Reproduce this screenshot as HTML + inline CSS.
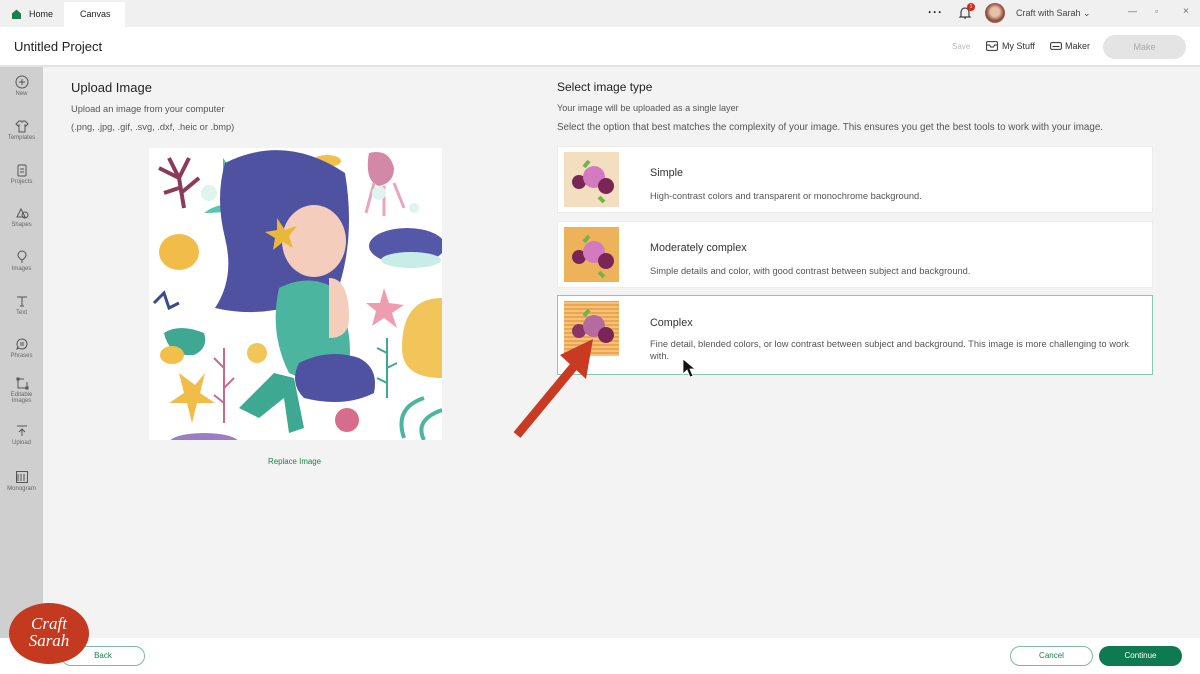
<!DOCTYPE html>
<html><head><meta charset="utf-8"><style>
*{margin:0;padding:0;box-sizing:border-box}
body{width:1200px;height:674px;overflow:hidden;font-family:"Liberation Sans",sans-serif;background:#f3f3f3;position:relative;color:#222}
.abs{position:absolute}
.top{left:0;top:0;width:1200px;height:27px;background:#f0f0f0}
.hdr{left:0;top:27px;width:1200px;height:40px;background:#fff;border-bottom:2px solid #e2e2e2}
.side{left:0;top:67px;width:43px;height:607px;background:#cfcfcf}
.si{position:absolute;width:43px;text-align:center;font-size:6px;color:#666}
.si svg{display:block;margin:0 auto 2px}
.card{position:absolute;left:557px;width:596px;background:#fff;border:1px solid #ececec}
.card .t{position:absolute;left:92px;font-size:10.8px;color:#333}
.card .d{position:absolute;left:92px;font-size:9.3px;color:#555;line-height:12px}
.thumb{position:absolute;left:6px;top:5px;width:55px;height:55px}
.foot{left:0;top:638px;width:1200px;height:36px;background:#fff}
.btn{position:absolute;height:20px;border-radius:10px;font-size:8px;text-align:center;line-height:18px}
</style></head><body>
<div class="abs top">
 <svg class="abs" style="left:11px;top:9px" width="11" height="10" viewBox="0 0 11 10"><path d="M1 4.5L5.5 0.5 10 4.5V10H1z" fill="#1b7f4f"/></svg>
 <div class="abs" style="left:29px;top:9px;font-size:9px">Home</div>
 <div class="abs" style="left:64px;top:2px;width:61px;height:25px;background:#fff"></div>
 <div class="abs" style="left:80px;top:9px;font-size:9px">Canvas</div>
 <div class="abs" style="left:928px;top:5px;font-size:12px;font-weight:bold;letter-spacing:1px">···</div>
 <svg class="abs" style="left:958px;top:6px" width="14" height="14" viewBox="0 0 14 14"><path d="M3 10V6a4 4 0 0 1 8 0v4l1 1H2z M6 12h2" fill="none" stroke="#444" stroke-width="1.2"/></svg>
 <div class="abs" style="left:967px;top:3px;width:8px;height:8px;border-radius:50%;background:#d42a1a;color:#fff;font-size:5px;text-align:center;line-height:8px">1</div>
 <div class="abs" style="left:985px;top:3px;width:20px;height:20px;border-radius:50%;background:radial-gradient(circle at 50% 45%,#e8c0a8 30%,#8a4a3a 60%,#c9a9a0)"></div>
 <div class="abs" style="left:1016px;top:8px;font-size:9px;color:#444">Craft with Sarah ⌄</div>
 <div class="abs" style="left:1128px;top:6px;font-size:9px;color:#666">—</div>
 <div class="abs" style="left:1155px;top:6px;font-size:9px;color:#666">▫</div>
 <div class="abs" style="left:1183px;top:6px;font-size:10px;color:#666">×</div>
</div>
<div class="abs hdr">
 <div class="abs" style="left:14px;top:12px;font-size:13px;color:#222">Untitled Project</div>
 <div class="abs" style="left:952px;top:15px;font-size:8px;color:#bbb">Save</div>
 <svg class="abs" style="left:986px;top:14px" width="12" height="10" viewBox="0 0 12 10"><rect x="0.6" y="0.6" width="10.8" height="8.8" rx="1" fill="none" stroke="#333"/><path d="M0.6 4h3l1 2h3l1-2h3" fill="none" stroke="#333"/></svg>
 <div class="abs" style="left:1002px;top:14px;font-size:9px;color:#333">My Stuff</div>
 <svg class="abs" style="left:1050px;top:15px" width="12" height="8" viewBox="0 0 12 8"><rect x="0.6" y="0.6" width="10.8" height="6.8" rx="1.5" fill="none" stroke="#333"/><path d="M2.5 4.5h7" stroke="#333"/></svg>
 <div class="abs" style="left:1065px;top:14px;font-size:9px;color:#333">Maker</div>
 <div class="abs" style="left:1103px;top:8px;width:83px;height:24px;border-radius:12px;background:#e4e4e4;color:#aaa;font-size:9px;text-align:center;line-height:24px">Make</div>
</div>
<div class="abs side">
 <div class="si" style="top:8px"><svg width="14" height="14" viewBox="0 0 14 14"><circle cx="7" cy="7" r="6" fill="none" stroke="#555"/><path d="M7 4v6M4 7h6" stroke="#555"/></svg>New</div>
 <div class="si" style="top:52px"><svg width="14" height="14" viewBox="0 0 14 14"><path d="M4 2L1 5l2 2 1-1v7h6V6l1 1 2-2-3-3H8a1 1 0 0 1-2 0z" fill="none" stroke="#555"/></svg>Templates</div>
 <div class="si" style="top:96px"><svg width="14" height="14" viewBox="0 0 14 14"><rect x="3" y="2" width="8" height="11" rx="1" fill="none" stroke="#555"/><path d="M5 6h4M5 9h4" stroke="#555"/></svg>Projects</div>
 <div class="si" style="top:139px"><svg width="14" height="14" viewBox="0 0 14 14"><path d="M2 11L6 3l4 8z" fill="none" stroke="#555"/><circle cx="10" cy="9" r="3" fill="none" stroke="#555"/></svg>Shapes</div>
 <div class="si" style="top:183px"><svg width="14" height="14" viewBox="0 0 14 14"><path d="M7 1a4 4 0 0 1 4 4c0 3-4 5-4 5S3 8 3 5a4 4 0 0 1 4-4zM7 10v3" fill="none" stroke="#555"/></svg>Images</div>
 <div class="si" style="top:227px"><svg width="14" height="14" viewBox="0 0 14 14"><path d="M2 3h10M7 3v9M5 12h4" stroke="#555" fill="none"/></svg>Text</div>
 <div class="si" style="top:270px"><svg width="14" height="14" viewBox="0 0 14 14"><path d="M7 2a5 5 0 1 1-3 9l-2 1 1-2a5 5 0 0 1 4-8zM5 6h4M5 8h4" fill="none" stroke="#555"/></svg>Phrases</div>
 <div class="si" style="top:309px"><svg width="14" height="14" viewBox="0 0 14 14"><path d="M3 3v9h9M3 3h6M12 6v6" fill="none" stroke="#555"/><rect x="1.5" y="1.5" width="3" height="3" fill="#555"/><rect x="10.5" y="10.5" width="3" height="3" fill="#555"/></svg>Editable<br>Images</div>
 <div class="si" style="top:357px"><svg width="14" height="14" viewBox="0 0 14 14"><path d="M2 2h10M7 12V5M4 8l3-3 3 3" fill="none" stroke="#555"/></svg>Upload</div>
 <div class="si" style="top:403px"><svg width="14" height="14" viewBox="0 0 14 14"><rect x="1.5" y="1.5" width="11" height="11" fill="none" stroke="#555"/><path d="M3 4v7M6 4v7M9 4v7" stroke="#555"/></svg>Monogram</div>
</div>
<div class="abs" style="left:71px;top:80px;font-size:13px;color:#222">Upload Image</div>
<div class="abs" style="left:71px;top:104px;font-size:9.3px;color:#555">Upload an image from your computer</div>
<div class="abs" style="left:71px;top:122px;font-size:9.3px;color:#555">(.png, .jpg, .gif, .svg, .dxf, .heic or .bmp)</div>
<svg class="abs" style="left:149px;top:148px" width="293" height="292" viewBox="0 0 293 292">
<rect width="293" height="292" fill="#fff"/>
<path d="M35 60L30 30 20 10M30 30L10 20M30 30L40 10M30 40L15 45M32 45L50 30" stroke="#8c3a5a" stroke-width="4" fill="none"/>
<ellipse cx="102" cy="18" rx="22" ry="10" fill="#5a5fa8"/><path d="M80 18l-6-8v16z" fill="#4dbfa8"/>
<ellipse cx="178" cy="13" rx="14" ry="6" fill="#f2c04a"/>
<path d="M55 65q15-12 40-8-10 8-40 8z" fill="#58c7b0"/>
<ellipse cx="30" cy="104" rx="20" ry="18" fill="#f2bc48"/>
<path d="M76 15q60-30 120 10 10 60 -5 110 -60 40-125 25 20-30 10-70 -10-40 0-75z" fill="#4f52a0"/>
<ellipse cx="165" cy="93" rx="32" ry="36" fill="#f4cdbd"/>
<path d="M128 70l8 12 12-4-8 10 4 12-10-6-10 8 2-12-10-6 12-2z" fill="#e9b83a"/>
<path d="M130 140q30-15 55 0 20 40 15 80 -30 20-60 5 -20-40-10-85z" fill="#4cb5a0"/>
<path d="M180 130q20 0 20 40 0 20-20 20z" fill="#f4cdbd"/>
<path d="M150 215q30-15 60-5 20 10 15 35 -30 15-70 5 -15-15-5-35z" fill="#4f52a0"/>
<path d="M125 225l-35 35 20 10 25-20 5 35 15-5-10-50z" fill="#3fa893"/>
<path d="M220 5q20-5 25 15 0 15-15 18 -15-5-10-33z" fill="#d488a8"/><path d="M225 35l-8 30M235 38l0 30M245 35l10 25" stroke="#e6a6c0" stroke-width="3" fill="none"/>
<ellipse cx="258" cy="98" rx="38" ry="18" fill="#5558a8"/><ellipse cx="262" cy="112" rx="30" ry="8" fill="#c8ece6"/>
<path d="M293 150q-40 0-40 50 0 30 40 30z" fill="#f2c55a"/>
<path d="M235 140l5 15 15 2-12 8 5 15-13-10-12 8 4-15-10-8h14z" fill="#ee9cb0"/>
<path d="M15 185q15-10 40 0 5 15-10 22 -25 2-30-22z" fill="#3fa893"/><ellipse cx="23" cy="207" rx="12" ry="9" fill="#f2c04a"/>
<path d="M30 225l5 20 -15 10 18 0 5 20 5-20 18 0-15-10 5-20-10 12z" fill="#f2bc48"/>
<circle cx="108" cy="205" r="10" fill="#f2c55a"/>
<path d="M75 200v75M75 220l-10-10M75 240l10-10M75 255l-10-8" stroke="#c66b8a" stroke-width="2" fill="none"/>
<path d="M238 190v60M238 205l-10-5M238 220l10-5M238 235l-10-5" stroke="#3fa893" stroke-width="2" fill="none"/>
<circle cx="198" cy="272" r="12" fill="#d76d8a"/>
<ellipse cx="55" cy="295" rx="35" ry="10" fill="#9a7ec4"/>
<path d="M255 290q-10-30 20-40 M275 292q-10-20 18-30" stroke="#4cb5a0" stroke-width="4" fill="none"/>
<path d="M5 155l10-10 5 15 10-5" stroke="#3a4a90" stroke-width="3" fill="none"/>
<circle cx="60" cy="45" r="8" fill="#dff3ef"/><circle cx="230" cy="45" r="7" fill="#dff3ef"/><circle cx="265" cy="60" r="5" fill="#dff3ef"/>
</svg>
<div class="abs" style="left:268px;top:457px;font-size:7.9px;color:#1b7f4f">Replace Image</div>
<div class="abs" style="left:557px;top:80px;font-size:12px;color:#222">Select image type</div>
<div class="abs" style="left:557px;top:103px;font-size:9.1px;color:#555">Your image will be uploaded as a single layer</div>
<div class="abs" style="left:557px;top:122px;font-size:9.8px;color:#555">Select the option that best matches the complexity of your image. This ensures you get the best tools to work with your image.</div>
<div class="card" style="top:146px;height:67px"><div class="thumb" style="background:#f3dfbf"><svg width="55" height="55"><circle cx="15" cy="30" r="7" fill="#7a2556"/><circle cx="30" cy="25" r="11" fill="#d47ac0"/><circle cx="42" cy="34" r="8" fill="#7a2556"/><path d="M20 15l5-6M35 45l5 5" stroke="#6fb54f" stroke-width="4"/></svg></div><div class="t" style="top:20px">Simple</div><div class="d" style="top:43px">High-contrast colors and transparent or monochrome background.</div></div>
<div class="card" style="top:221px;height:67px"><div class="thumb" style="background:#eeb35a"><svg width="55" height="55"><circle cx="15" cy="30" r="7" fill="#7a2556"/><circle cx="30" cy="25" r="11" fill="#d47ac0"/><circle cx="42" cy="34" r="8" fill="#7a2556"/><path d="M20 15l5-6M35 45l5 5" stroke="#6fb54f" stroke-width="4"/></svg></div><div class="t" style="top:20px">Moderately complex</div><div class="d" style="top:43px">Simple details and color, with good contrast between subject and background.</div></div>
<div class="card" style="top:295px;height:80px;border:1px solid #86c9b3"><div class="thumb" style="background:repeating-linear-gradient(0deg,#f6c27a 0 2px,#eaa550 2px 4px)"><svg width="55" height="55"><circle cx="15" cy="30" r="7" fill="#8a3566"/><circle cx="30" cy="25" r="11" fill="#b56aa0"/><circle cx="42" cy="34" r="8" fill="#7a2556"/><path d="M20 15l5-6" stroke="#6fb54f" stroke-width="4"/></svg></div><div class="t" style="top:21px">Complex</div><div class="d" style="top:42px;width:490px">Fine detail, blended colors, or low contrast between subject and background. This image is more challenging to work with.</div></div>
<svg class="abs" style="left:505px;top:325px" width="100" height="120"><path d="M12 110L70 40" stroke="#c93a22" stroke-width="9"/><path d="M88 14L55 30l26 24z" fill="#c93a22"/></svg>
<svg class="abs" style="left:682px;top:358px" width="14" height="20"><path d="M1 1v15l4-4 3 7 3-1-3-7h5z" fill="#111" stroke="#fff" stroke-width=".8"/></svg>
<div class="abs foot"></div>
<div class="btn" style="left:61px;top:646px;width:84px;border:1px solid #7fb8a4;color:#1b7f4f;background:#fff">Back</div>
<div class="btn" style="left:1010px;top:646px;width:83px;border:1px solid #7fb8a4;color:#1b7f4f;background:#fff">Cancel</div>
<div class="btn" style="left:1099px;top:646px;width:83px;background:#0e7a51;color:#fff;line-height:20px">Continue</div>
<div class="abs" style="left:9px;top:603px;width:80px;height:61px;border-radius:50%;background:#c43a20;color:#fff;font-family:'Liberation Serif',serif;font-style:italic;font-size:17px;line-height:17px;text-align:center;padding-top:12px">Craft<br>Sarah</div>
</body></html>
